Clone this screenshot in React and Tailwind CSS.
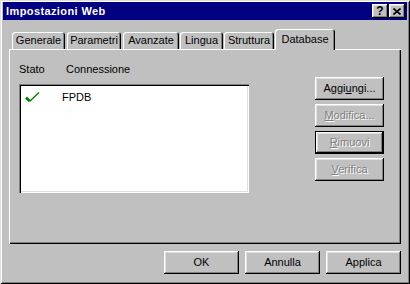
const raised =
  "shadow-[inset_-1px_-1px_#000,inset_1px_1px_#fff,inset_-2px_-2px_#808080,inset_2px_2px_#dfdfdf]";

const Tab = ({ label, className, active }) => (
  <div
    className={`${className} ${
      active ? "relative z-10 h-[21px] -mb-[1px]" : "h-[17px]"
    } flex items-center justify-center rounded-t-[3px] bg-[#c0c0c0] shadow-[inset_1px_1px_#fff,inset_-1px_0_#000,inset_-2px_0_#808080]`}
  >
    {label}
  </div>
);

const Btn = ({ children, className = "", disabled, isDefault }) => (
  <div
    className={`${className} h-[23px] flex items-center justify-center ${
      isDefault
        ? "shadow-[inset_0_0_0_1px_#000,inset_-2px_-2px_#000,inset_2px_2px_#fff,inset_-3px_-3px_#808080,inset_3px_3px_#dfdfdf]"
        : raised
    } ${disabled ? "text-[#808080] [text-shadow:1px_1px_#fff]" : "text-black"}`}
  >
    {children}
  </div>
);

const Check = () => (
  <svg width="15" height="11" viewBox="0 0 15 11">
    <path d="M1 5.5 L4.5 9" stroke="#008000" strokeWidth="2.6" fill="none" />
    <path d="M4.5 9.5 L14 0.5" stroke="#008000" strokeWidth="1.4" fill="none" />
  </svg>
);

export default function App() {
  return (
    <div className="w-[410px] h-[284px] bg-[#c0c0c0] pt-[2px] px-[3px] text-[11px] leading-[13px] text-black font-['Liberation_Sans',Arial,sans-serif] shadow-[inset_1px_1px_#dfdfdf,inset_-1px_-1px_#000,inset_2px_2px_#fff,inset_-2px_-2px_#808080]">
      {/* title bar */}
      <div className="h-[18px] bg-[#000080] flex items-center justify-between pl-[3px] pr-[2px]">
        <span className="text-white font-bold text-[11px] tracking-[0.4px]">Impostazioni Web</span>
        <div className="flex gap-[1px]">
          <div className={`w-[16px] h-[14px] bg-[#c0c0c0] flex items-center justify-center font-bold text-[12px] ${raised}`}>
            ?
          </div>
          <div className={`w-[16px] h-[14px] bg-[#c0c0c0] flex items-center justify-center ${raised}`}>
            <svg width="8" height="7" viewBox="0 0 8 7">
              <path d="M0.5 0.5 L7.5 6.5 M7.5 0.5 L0.5 6.5" stroke="#000" strokeWidth="1.6" />
            </svg>
          </div>
        </div>
      </div>

      <div className="px-[6px]">
        {/* tabs */}
        <div className="mt-[9px] h-[20px] flex items-end pl-[3px]">
          <Tab label="Generale" className="w-[53px]" />
          <Tab label="Parametri" className="ml-[2px] w-[54px]" />
          <Tab label="Avanzate" className="ml-[2px] w-[56px]" />
          <Tab label="Lingua" className="ml-[1px] w-[43px]" />
          <Tab label="Struttura" className="ml-[1px] w-[50px]" />
          <Tab label="Database" className="ml-[1px] w-[60px]" active />
        </div>

        {/* panel */}
        <div className="h-[195px] flex pt-[14px] shadow-[inset_1px_1px_#fff,inset_-1px_-1px_#000,inset_-2px_-2px_#808080]">
          <div className="pl-[10px]">
            <div className="flex">
              <span className="w-[47px]">Stato</span>
              <span>Connessione</span>
            </div>
            <div className="mt-[8px] w-[230px] h-[109px] pt-[7px] bg-white shadow-[inset_1px_1px_#808080,inset_2px_2px_#000,inset_-1px_-1px_#fff,inset_-2px_-2px_#dfdfdf]">
              <div className="pl-[6px] h-[13px] flex items-center">
                <Check />
                <span className="ml-[22px]">FPDB</span>
              </div>
            </div>
          </div>
          <div className="ml-[66px] mt-[14px] flex flex-col gap-[4px]">
            <Btn className="w-[69px]">
              <span>
                Aggi<span className="underline underline-offset-[1px]">u</span>ngi...
              </span>
            </Btn>
            <Btn className="w-[69px]" disabled>
              <span>
                <span className="underline underline-offset-[1px]">M</span>odifica...
              </span>
            </Btn>
            <Btn className="w-[69px]" disabled isDefault>
              <span>
                <span className="underline underline-offset-[1px]">R</span>imuovi
              </span>
            </Btn>
            <Btn className="w-[69px]" disabled>
              <span>
                <span className="underline underline-offset-[1px]">V</span>erifica
              </span>
            </Btn>
          </div>
        </div>

        {/* bottom buttons */}
        <div className="mt-[7px] flex justify-end gap-[6px]">
          <Btn className="w-[75px]">OK</Btn>
          <Btn className="w-[75px]">Annulla</Btn>
          <Btn className="w-[75px]">Applica</Btn>
        </div>
      </div>
    </div>
  );
}
